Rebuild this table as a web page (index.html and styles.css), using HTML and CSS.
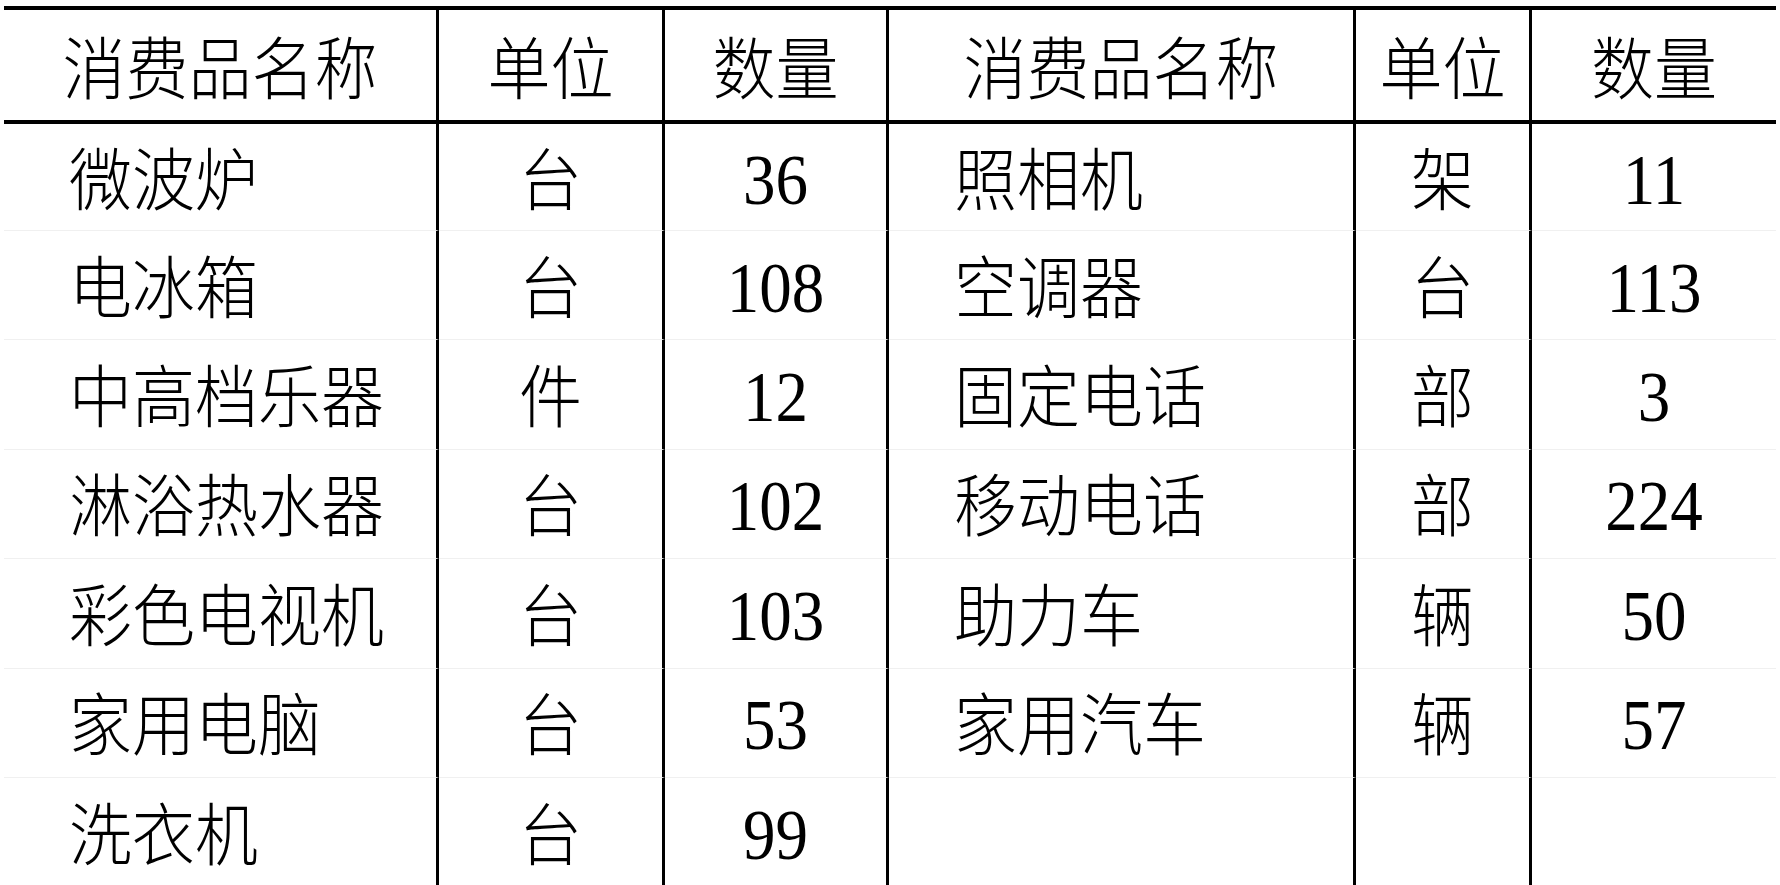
FILE: index.html
```html
<!DOCTYPE html>
<html lang="zh-CN">
<head>
<meta charset="utf-8">
<title>消费品统计</title>
<link rel="stylesheet" href="styles.css">
</head>
<body>
<div class="sheet">
  <div class="cell head c1"><span class="t">消费品名称</span></div>
  <div class="cell head c2"><span class="t">单位</span></div>
  <div class="cell head c3"><span class="t">数量</span></div>
  <div class="cell head c4"><span class="t">消费品名称</span></div>
  <div class="cell head c5"><span class="t">单位</span></div>
  <div class="cell head c6"><span class="t">数量</span></div>

  <div class="cell name c1 first"><span class="t">微波炉</span></div>
  <div class="cell unit c2 first"><span class="t">台</span></div>
  <div class="cell num c3 first"><span class="t">36</span></div>
  <div class="cell name c4 first"><span class="t">照相机</span></div>
  <div class="cell unit c5 first"><span class="t">架</span></div>
  <div class="cell num c6 first"><span class="t">11</span></div>

  <div class="cell name c1"><span class="t">电冰箱</span></div>
  <div class="cell unit c2"><span class="t">台</span></div>
  <div class="cell num c3"><span class="t">108</span></div>
  <div class="cell name c4"><span class="t">空调器</span></div>
  <div class="cell unit c5"><span class="t">台</span></div>
  <div class="cell num c6"><span class="t">113</span></div>

  <div class="cell name c1"><span class="t">中高档乐器</span></div>
  <div class="cell unit c2"><span class="t">件</span></div>
  <div class="cell num c3"><span class="t">12</span></div>
  <div class="cell name c4"><span class="t">固定电话</span></div>
  <div class="cell unit c5"><span class="t">部</span></div>
  <div class="cell num c6"><span class="t">3</span></div>

  <div class="cell name c1"><span class="t">淋浴热水器</span></div>
  <div class="cell unit c2"><span class="t">台</span></div>
  <div class="cell num c3"><span class="t">102</span></div>
  <div class="cell name c4"><span class="t">移动电话</span></div>
  <div class="cell unit c5"><span class="t">部</span></div>
  <div class="cell num c6"><span class="t">224</span></div>

  <div class="cell name c1"><span class="t">彩色电视机</span></div>
  <div class="cell unit c2"><span class="t">台</span></div>
  <div class="cell num c3"><span class="t">103</span></div>
  <div class="cell name c4"><span class="t">助力车</span></div>
  <div class="cell unit c5"><span class="t">辆</span></div>
  <div class="cell num c6"><span class="t">50</span></div>

  <div class="cell name c1"><span class="t">家用电脑</span></div>
  <div class="cell unit c2"><span class="t">台</span></div>
  <div class="cell num c3"><span class="t">53</span></div>
  <div class="cell name c4"><span class="t">家用汽车</span></div>
  <div class="cell unit c5"><span class="t">辆</span></div>
  <div class="cell num c6"><span class="t">57</span></div>

  <div class="cell name c1"><span class="t">洗衣机</span></div>
  <div class="cell unit c2"><span class="t">台</span></div>
  <div class="cell num c3"><span class="t">99</span></div>
  <div class="cell name c4"><span class="t"></span></div>
  <div class="cell unit c5"><span class="t"></span></div>
  <div class="cell num c6"><span class="t"></span></div>
</div>
</body>
</html>
```
FILE: styles.css
```css
html, body {
  margin: 0;
  padding: 0;
  background: #ffffff;
}

body {
  font-family: "Noto Sans CJK SC", "Liberation Serif", serif;
  color: #000;
  overflow: hidden;
}

.sheet {
  margin: 6px 0 0 4px;
  width: 1772px;
  display: grid;
  grid-template-columns: 435px 226px 224px 467px 176px 244px;
  grid-template-rows: 114px 107px repeat(6, 109.4px);
  border-top: 4px solid #000;
}

.cell {
  box-sizing: border-box;
  display: flex;
  align-items: center;
  border-right: 3px solid #000;
  border-bottom: 1px solid #f0f0f0;
  font-size: 63px;
  line-height: 1;
  white-space: nowrap;
}

.cell.c6 {
  border-right: none;
}

.t {
  display: inline-block;
  transform: scaleY(1.08);
  font-weight: 300;
}

.head {
  justify-content: center;
  border-bottom: 4px solid #000;
  padding-bottom: 2px;
}

.name {
  justify-content: flex-start;
  padding-left: 65px;
  padding-bottom: 4px;
}

.unit {
  justify-content: center;
  padding-bottom: 4px;
}

.num {
  justify-content: center;
  font-family: "Liberation Serif", serif;
  font-size: 65px;
  padding-top: 6px;
}

.num .t {
  font-weight: 400;
  transform: scaleY(1.1);
}
```
